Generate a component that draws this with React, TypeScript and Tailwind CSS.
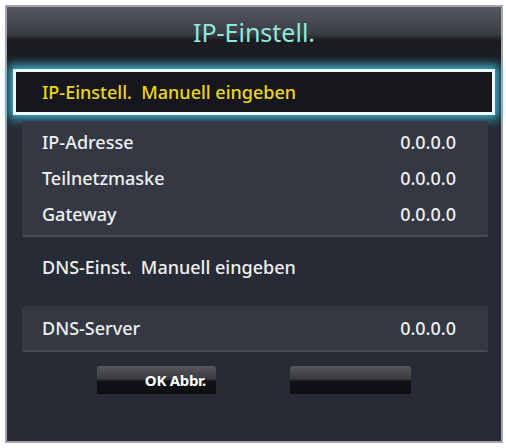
const font = { fontFamily: '"Noto Sans", "Open Sans", sans-serif' }

const rows = [
  { label: 'IP-Adresse', value: '0.0.0.0' },
  { label: 'Teilnetzmaske', value: '0.0.0.0' },
  { label: 'Gateway', value: '0.0.0.0' },
]

export default function App() {
  return (
    <div className="w-[506px] h-[448px] bg-white pt-[5px] pl-[5px]" style={font}>
      <div className="w-[498px] h-[438px] border-2 border-[#a3a6ad] bg-[#272b35] flex flex-col">
        {/* Kopfzeile */}
        <div className="h-[54px] bg-[linear-gradient(to_bottom,#55585f_0%,#3a3d43_50%,#1a1c21_62%,#1c1f25_100%)] flex items-center justify-center">
          <h1 className="text-[25px] font-normal text-[#8fe8dc] -mt-[2px]">IP-Einstell.</h1>
        </div>

        <div className="bg-[#1d2027] pt-[8px] pb-[6px]">
          <div className="mx-[6px] h-[46px] border-[3px] border-[#eef8fa] bg-[#16171d] shadow-[0_0_9px_4px_rgba(70,200,235,0.85)] flex items-center pl-[26px]">
            <span className="text-[18px] text-[#ecd818] font-medium">IP-Einstell.&nbsp; Manuell eingeben</span>
          </div>
        </div>

        <div className="mx-[15px] mr-[13px] h-[116px] bg-[#343843] rounded-[2px] border-b-2 border-[#474b55] pt-[3px] pl-[20px] pr-[32px] flex flex-col">
          {rows.map((r) => (
            <div key={r.label} className="h-[36px] flex items-center justify-between text-[18px] font-medium text-[#eef0f2]">
              <span>{r.label}</span>
              <span>{r.value}</span>
            </div>
          ))}
        </div>

        <div className="mt-[12px] h-[36px] flex items-center pl-[35px] text-[18px] font-medium text-[#eef0f2]">
          DNS-Einst.&nbsp; Manuell eingeben
        </div>

        <div className="mt-[21px] mx-[15px] mr-[13px] h-[46px] bg-[#343843] rounded-[2px] border-b-2 border-[#474b55] pl-[20px] pr-[32px] flex items-center justify-between text-[18px] font-medium text-[#eef0f2]">
          <span>DNS-Server</span>
          <span>0.0.0.0</span>
        </div>

        <div className="mt-[14px] flex justify-center gap-[74px]">
          <div className="w-[119px] h-[28px] rounded-t-[3px] bg-[linear-gradient(to_bottom,#55575c_0%,#3a3c40_45%,#121316_55%,#0d0e10_100%)] flex items-center justify-end pr-[10px]">
            <span className="text-[15px] font-bold text-white tracking-[-0.3px]">OK Abbr.</span>
          </div>
          <div className="w-[121px] h-[28px] rounded-t-[3px] bg-[linear-gradient(to_bottom,#55575c_0%,#3a3c40_45%,#121316_55%,#0d0e10_100%)]" />
        </div>
      </div>
    </div>
  )
}
